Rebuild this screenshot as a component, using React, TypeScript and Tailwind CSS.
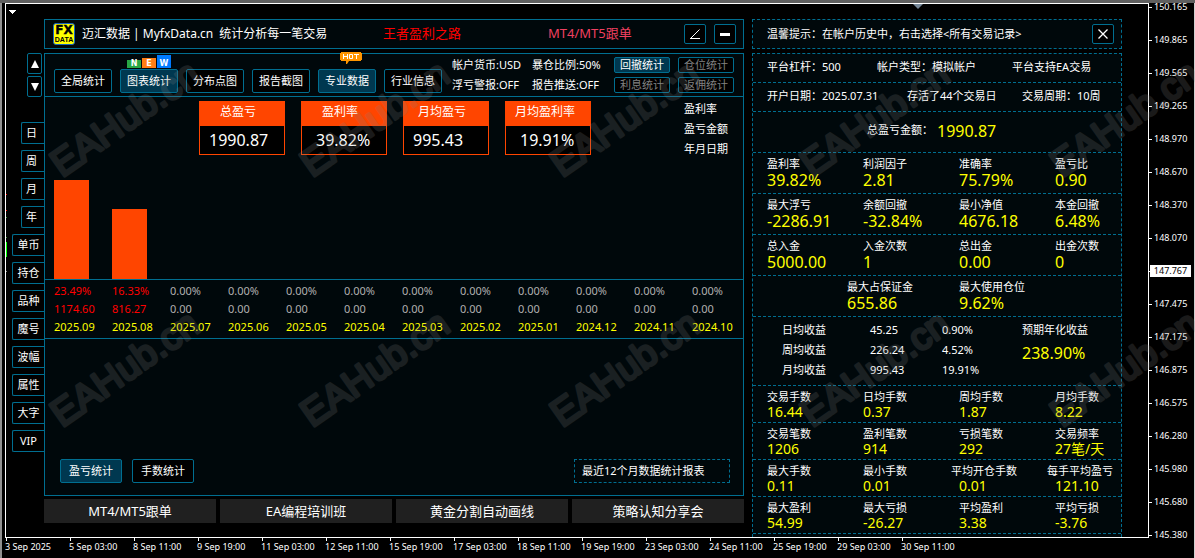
import { clsx } from "clsx";

const TOOL_TABS = ["全局统计", "图表统计", "分布点图", "报告截图", "专业数据", "行业信息"];
const SMALL_TABS = ["回撤统计", "仓位统计", "利息统计", "返佣统计"];
const SIDE_SHORT = ["日", "周", "月", "年"];
const SIDE_LONG = ["单币", "持仓", "品种", "魔号", "波幅", "属性", "大字", "VIP"];
const FOOTER_LINKS = ["MT4/MT5跟单", "EA编程培训班", "黄金分割自动画线", "策略认知分享会"];

const CARDS = [
  { label: "总盈亏", value: "1990.87", labelPad: "pl-5", valuePad: "pl-[9px]" },
  { label: "盈利率", value: "39.82%", labelPad: "pl-5", valuePad: "pl-[14px]" },
  { label: "月均盈亏", value: "995.43", labelPad: "pl-[14px]", valuePad: "pl-[9px]" },
  { label: "月均盈利率", value: "19.91%", labelPad: "pl-[9px]", valuePad: "pl-[14px]" },
];

const MONTHS = [
  { month: "2025.09", rate: "23.49%", profit: "1174.60", bar: 99 },
  { month: "2025.08", rate: "16.33%", profit: "816.27", bar: 70 },
  { month: "2025.07", rate: "0.00%", profit: "0.00", bar: 0 },
  { month: "2025.06", rate: "0.00%", profit: "0.00", bar: 0 },
  { month: "2025.05", rate: "0.00%", profit: "0.00", bar: 0 },
  { month: "2025.04", rate: "0.00%", profit: "0.00", bar: 0 },
  { month: "2025.03", rate: "0.00%", profit: "0.00", bar: 0 },
  { month: "2025.02", rate: "0.00%", profit: "0.00", bar: 0 },
  { month: "2025.01", rate: "0.00%", profit: "0.00", bar: 0 },
  { month: "2024.12", rate: "0.00%", profit: "0.00", bar: 0 },
  { month: "2024.11", rate: "0.00%", profit: "0.00", bar: 0 },
  { month: "2024.10", rate: "0.00%", profit: "0.00", bar: 0 },
];

const STATS_TOP = [
  [["盈利率", "39.82%"], ["利润因子", "2.81"], ["准确率", "75.79%"], ["盈亏比", "0.90"]],
  [["最大浮亏", "-2286.91"], ["余额回撤", "-32.84%"], ["最小净值", "4676.18"], ["本金回撤", "6.48%"]],
  [["总入金", "5000.00"], ["入金次数", "1"], ["总出金", "0.00"], ["出金次数", "0"]],
];

const STATS_BOTTOM = [
  [["交易手数", "16.44"], ["日均手数", "0.37"], ["周均手数", "1.87"], ["月均手数", "8.22"]],
  [["交易笔数", "1206"], ["盈利笔数", "914"], ["亏损笔数", "292"], ["交易频率", "27笔/天"]],
  [["最大手数", "0.11"], ["最小手数", "0.01"], ["平均开仓手数", "0.01"], ["每手平均盈亏", "121.10"]],
  [["最大盈利", "54.99"], ["最大亏损", "-26.27"], ["平均盈利", "3.38"], ["平均亏损", "-3.76"]],
];

const AVERAGES = [
  ["日均收益", "45.25", "0.90%"],
  ["周均收益", "226.24", "4.52%"],
  ["月均收益", "995.43", "19.91%"],
];

const PRICES = [
  "150.165", "149.865", "149.565", "149.265", "148.970", "148.670", "148.370", "148.070", "147.767",
  "147.475", "147.175", "146.875", "146.575", "146.280", "145.980", "145.680", "145.380",
];
const CURRENT_PRICE = "147.767";

const TIMES = [
  "3 Sep 2025", "5 Sep 03:00", "8 Sep 11:00", "9 Sep 19:00", "11 Sep 03:00", "12 Sep 11:00", "15 Sep 19:00",
  "17 Sep 03:00", "18 Sep 11:00", "19 Sep 19:00", "23 Sep 03:00", "24 Sep 11:00", "25 Sep 19:00",
  "29 Sep 03:00", "30 Sep 11:00",
];

const WATERMARKS = [0, 1, 2, 3, 4].flatMap((col) => [0, 1].map((row) => ({ x: 62 + col * 250, y: 175 + row * 250 })));

const Logo = () => (
  <svg width="22" height="22" viewBox="0 0 22 22" className="shrink-0" aria-hidden="true">
    <rect x="0.5" y="0.5" width="21" height="21" rx="2.5" fill="#ffff00" stroke="#1565c0" />
    <text x="11" y="11" textAnchor="middle" fontFamily="DejaVu Sans" fontWeight="700" fontSize="12" fill="#000" stroke="#000" strokeWidth="0.4">FX</text>
    <text x="11" y="19" textAnchor="middle" fontFamily="Liberation Sans" fontWeight="700" fontSize="7" fill="#000">DATA</text>
  </svg>
);

const NewBadge = () => (
  <span className="absolute -top-[15px] left-[6px] flex items-end gap-px font-['DejaVu_Sans'] text-[8px] leading-2 font-bold text-white">
    <span className="flex h-2 w-[14px] items-center justify-center bg-[#28a745]">N</span>
    <span className="flex h-[10px] w-[14px] items-end justify-center bg-[#fd7e14]">E</span>
    <span className="flex h-[13px] w-[14px] items-end justify-center bg-[#007bff]">W</span>
  </span>
);

const HotBadge = () => (
  <svg width="22" height="13" viewBox="0 0 22 13" className="absolute -top-[18px] left-[21px]" aria-hidden="true">
    <path d="M1 0h20v1h1v7h-1v1H9L7 12H6V9H1V8H0V1h1z" fill="#ff9500" />
    <path
      d="M3.5 2v5M7.5 2v5M3.5 4.5h4M9.5 2.5h3v4h-3zM14 2.5h5M16.5 2.5V7"
      fill="none"
      stroke="#fff"
      strokeWidth="1"
    />
  </svg>
);

const StatRow = ({ items, large }: { items: string[][]; large?: boolean }) => (
  <dl
    className={clsx(
      "grid grid-cols-[96px_96px_96px_1fr] border-b border-dashed border-[#006e90] pt-[3px] pl-[14px]",
      large ? "h-[41px]" : "h-[37px]",
    )}
  >
    {items.map(([label, value]) => (
      <div key={label} className="whitespace-nowrap">
        <dt className={clsx("leading-[15px]", label.length > 5 && "-ml-2")}>{label}</dt>
        <dd className={clsx("text-[#ffff00]", large ? "text-base leading-[18px]" : "text-sm leading-[15px]")}>{value}</dd>
      </div>
    ))}
  </dl>
);

const iconButton = "flex h-5 w-[22px] items-center justify-center rounded-[2px] border border-[#006e90] bg-black";
const sideButton = "h-[22px] rounded-l-[2px] border border-r-0 border-[#006e90] bg-black";

export default function App() {
  return (
    <div className="relative flex min-h-screen overflow-hidden border-t-3 border-[#606060] bg-black font-['Noto_Sans','Noto_Sans_CJK_SC',sans-serif] text-[11px] text-white">
      <div className="w-[5px] shrink-0 border-r-2 border-l-2 border-r-black border-l-[#909090]" />

      <div className="flex min-w-0 flex-1 flex-col">
        <main className="relative flex border border-white pt-[15px] pr-[26px]">
          <svg width="8" height="4" viewBox="0 0 8 4" className="absolute top-[6px] left-[3px]" aria-hidden="true">
            <path d="M0 0h7v1H6v1H5v1H4v1H3V3H2V2H1V1H0z" fill="#fff" />
          </svg>
          <svg width="10" height="5" viewBox="0 0 10 5" className="absolute top-0 right-[225px]" aria-hidden="true">
            <path d="M0 0h10L5 5z" fill="#778899" />
          </svg>
          {/* edges of the candles hidden behind the panel */}
          <svg width="2" height="80" viewBox="0 0 2 80" className="absolute top-[190px] left-0" aria-hidden="true">
            <path d="M0 0h1v1H0zM0 16h1v1H0z" fill="#f00" />
            <path d="M0 23h1v1H0zM0 43h1v1H0z" fill="#3a8a3a" />
            <path d="M0 48h1v15H0z" fill="#0f0" />
            <path d="M0 77h1v1H0z" fill="#888" />
          </svg>

          <nav className="flex w-[38px] shrink-0 flex-col items-end pt-[34px]">
            <div className="mr-[2px] flex flex-col gap-[2px]">
              {["M4 0l4 8H0z", "M4 8l4-8H0z"].map((d, i) => (
                <button
                  key={d}
                  aria-label={i === 0 ? "上移" : "下移"}
                  className="flex h-[21px] w-[15px] items-center justify-center rounded-[2px] border border-[#006e90] bg-black"
                >
                  <svg width="8" height="8" viewBox="0 0 8 8">
                    <path d={d} fill="#fff" />
                  </svg>
                </button>
              ))}
            </div>
            <div className="mt-[25px] flex flex-col items-end gap-[6px]">
              {SIDE_SHORT.map((name) => (
                <button key={name} className={clsx(sideButton, "w-[23px] pr-[3px]")}>{name}</button>
              ))}
              {SIDE_LONG.map((name) => (
                <button key={name} className={clsx(sideButton, "w-8")}>{name}</button>
              ))}
            </div>
          </nav>

          <div className="flex min-w-0 flex-1 flex-col">
            <header className="flex h-[30px] items-center border border-[#006e90] bg-[#00080b] pr-[7px] pl-2">
              <Logo />
              <h1 className="ml-[7px] flex w-[301px] gap-[6px] text-xs whitespace-nowrap">
                <span>迈汇数据 | MyfxData.cn</span>
                <span>统计分析每一笔交易</span>
              </h1>
              <a href="#road" className="w-[165px] text-[13px] text-[#ff0000]">王者盈利之路</a>
              <a href="#copy" className="text-[13px] text-[#f04060]">MT4/MT5跟单</a>
              <div className="ml-auto flex gap-2">
                <button className={iconButton} aria-label="画线">
                  <svg width="12" height="12" viewBox="0 0 12 12" fill="none" stroke="#fff">
                    <path d="M10.5 1.5l-9 9M1 10.5h10" />
                  </svg>
                </button>
                <button className={iconButton} aria-label="最小化">
                  <svg width="10" height="3" viewBox="0 0 10 3">
                    <path d="M0 0h10v3H0z" fill="#fff" />
                  </svg>
                </button>
              </div>
            </header>

            <section className="mt-1 border border-[#006e90] bg-[#00080b]">
              <div className="flex h-[43px] border-b border-[#006e90] pr-[9px] pl-[9px]">
                <div className="flex gap-2 pt-[15px]">
                  {TOOL_TABS.map((name, i) => (
                    <button
                      key={name}
                      className={clsx(
                        "relative h-6 w-[58px] rounded-[2px] border border-[#006e90] whitespace-nowrap",
                        i === 1 || i === 4 ? "bg-[#003850]" : "bg-black",
                      )}
                    >
                      {name}
                      {i === 1 && <NewBadge />}
                      {i === 4 && <HotBadge />}
                    </button>
                  ))}
                </div>
                <div className="ml-[10px] grid flex-1 grid-cols-[80px_1fr] content-start pt-px leading-5 whitespace-nowrap">
                  <span>帐户货币:USD</span>
                  <span>暴仓比例:50%</span>
                  <span>浮亏警报:OFF</span>
                  <span>报告推送:OFF</span>
                </div>
                <div className="grid grid-cols-2 content-start gap-x-2 gap-y-1 pt-[3px]">
                  {SMALL_TABS.map((name, i) => (
                    <button
                      key={name}
                      className={clsx(
                        "h-4 w-14 rounded-[2px] border border-[#006e90] leading-[14px]",
                        i === 0 ? "bg-[#003850]" : "bg-black text-[#808080]",
                      )}
                    >
                      {name}
                    </button>
                  ))}
                </div>
              </div>

              <div className="flex h-[182px] flex-col">
                <div className="flex justify-between pt-1 pr-[15px] pl-[154px]">
                  <div className="flex gap-4">
                    {CARDS.map((card) => (
                      <div key={card.label} className="h-[54px] w-[86px] border border-[#ff4500] bg-black whitespace-nowrap">
                        <h2 className={clsx("h-6 bg-[#ff4500] text-xs leading-5", card.labelPad)}>{card.label}</h2>
                        <p className={clsx("text-base leading-7", card.valuePad)}>{card.value}</p>
                      </div>
                    ))}
                  </div>
                  <ul className="-mt-[2px] leading-5">
                    <li>盈利率</li>
                    <li>盈亏金额</li>
                    <li>年月日期</li>
                  </ul>
                </div>
                <div className="grid flex-1 grid-cols-12 items-end pr-[2px]">
                  {MONTHS.map((m) => (
                    <div key={m.month} className="pl-[9px]">
                      <div className="w-[35px] bg-[#ff4500]" style={{ height: m.bar }} />
                    </div>
                  ))}
                </div>
              </div>

              <div className="border-y border-[#006e90] pt-[2px] pr-[2px] pb-[2px]">
                <table className="w-full table-fixed text-left leading-[18px]">
                  <tbody>
                    <tr>
                      {MONTHS.map((m) => (
                        <td key={m.month} className={clsx("pl-[9px]", m.bar ? "text-[#ff0000]" : "text-[#b0b0b0]")}>{m.rate}</td>
                      ))}
                    </tr>
                    <tr>
                      {MONTHS.map((m) => (
                        <td key={m.month} className={clsx("pl-[9px]", m.bar ? "text-[#ff0000]" : "text-[#b0b0b0]")}>{m.profit}</td>
                      ))}
                    </tr>
                    <tr>
                      {MONTHS.map((m) => (
                        <th key={m.month} scope="col" className="pl-[9px] font-normal text-[#ffff00]">{m.month}</th>
                      ))}
                    </tr>
                  </tbody>
                </table>
              </div>

              <div className="flex h-[156px] items-end gap-[10px] pr-[13px] pb-3 pl-[15px]">
                <button className="h-6 w-[62px] rounded-[2px] border border-[#006e90] bg-[#003850]">盈亏统计</button>
                <button className="h-6 w-[62px] rounded-[2px] border border-[#006e90] bg-black">手数统计</button>
                <p className="ml-auto h-6 w-[156px] border border-dashed border-[#006e90] pl-[7px] leading-[22px]">
                  最近12个月数据统计报表
                </p>
              </div>
            </section>

            <footer className="mt-[3px] mb-[14px] grid grid-cols-4 gap-1 text-[13px]">
              {FOOTER_LINKS.map((name) => (
                <a key={name} href="#more" className="h-6 bg-[#202020] text-center leading-6">{name}</a>
              ))}
            </footer>
          </div>

          <aside className="ml-2 flex w-[370px] shrink-0 flex-col whitespace-nowrap">
            <div className="flex h-[30px] items-center justify-between border border-dashed border-[#006e90] bg-[#00080b] pr-[7px] pl-[14px]">
              <p>温馨提示：在帐户历史中，右击选择&lt;所有交易记录&gt;</p>
              <button className={iconButton} aria-label="关闭">
                <svg width="10" height="10" viewBox="0 0 10 10" stroke="#fff" strokeWidth="1.3">
                  <path d="M0.5 0.5l9 9M9.5 0.5l-9 9" />
                </svg>
              </button>
            </div>

            <div className="mt-1 flex-1 border border-b-0 border-dashed border-[#006e90] bg-[#00080b]">
              <div className="grid h-[29px] grid-cols-[110px_135px_1fr] border-b border-dashed border-[#006e90] pl-[14px] leading-[26px]">
                <span>平台杠杆：500</span>
                <span>帐户类型：模拟帐户</span>
                <span>平台支持EA交易</span>
              </div>
              <div className="grid h-[29px] grid-cols-[140px_115px_1fr] border-b border-dashed border-[#006e90] pl-[14px] leading-[26px]">
                <span>开户日期：2025.07.31</span>
                <span>存活了44个交易日</span>
                <span>交易周期：10周</span>
              </div>
              <div className="flex h-[41px] items-center border-b border-dashed border-[#006e90] pb-[3px] pl-[114px]">
                <span className="w-[70px]">总盈亏金额：</span>
                <span className="text-base text-[#ffff00]">1990.87</span>
              </div>
              {STATS_TOP.map((items) => (
                <StatRow key={items[0][0]} items={items} large />
              ))}
              <dl className="grid h-[41px] grid-cols-[112px_1fr] border-b border-dashed border-[#006e90] pt-[3px] pl-[94px]">
                <div>
                  <dt className="leading-[15px]">最大占保证金</dt>
                  <dd className="text-base leading-[18px] text-[#ffff00]">655.86</dd>
                </div>
                <div>
                  <dt className="leading-[15px]">最大使用仓位</dt>
                  <dd className="text-base leading-[18px] text-[#ffff00]">9.62%</dd>
                </div>
              </dl>
              <div className="flex h-[69px] border-b border-dashed border-[#006e90] pt-[3px] pl-[29px]">
                <table className="w-60 table-fixed self-start text-left leading-5">
                  <tbody>
                    {AVERAGES.map(([label, amount, rate]) => (
                      <tr key={label}>
                        <th scope="row" className="w-[88px] font-normal">{label}</th>
                        <td className="w-[72px]">{amount}</td>
                        <td>{rate}</td>
                      </tr>
                    ))}
                  </tbody>
                </table>
                <div>
                  <p className="leading-5">预期年化收益</p>
                  <p className="text-base leading-[26px] text-[#ffff00]">238.90%</p>
                </div>
              </div>
              {STATS_BOTTOM.map((items) => (
                <StatRow key={items[0][0]} items={items} />
              ))}
            </div>
          </aside>
        </main>

        <ol className="flex pt-[3px] text-[9px] leading-3 whitespace-nowrap">
          {TIMES.map((time) => (
            <li
              key={time}
              className="relative w-16 shrink-0 before:absolute before:-top-[3px] before:left-px before:h-[3px] before:w-px before:bg-white"
            >
              {time}
            </li>
          ))}
        </ol>
      </div>

      <ol className="flex w-[46px] shrink-0 flex-col justify-between border-r border-[#d0d0d0] pb-[19px] text-[9px]">
        {PRICES.map((price) => (
          <li key={price} className="flex h-2 items-center gap-[2px] before:h-px before:w-[3px] before:bg-white">
            {price === CURRENT_PRICE ? (
              <span className="-ml-1 flex h-3 w-[41px] items-center justify-center bg-white text-black">{price}</span>
            ) : (
              price
            )}
          </li>
        ))}
      </ol>

      <svg className="pointer-events-none absolute inset-0 size-full opacity-20" aria-hidden="true">
        {WATERMARKS.map(({ x, y }) => (
          <text
            key={`${x}-${y}`}
            transform={`translate(${x} ${y}) rotate(-35)`}
            fontFamily="Liberation Sans"
            fontSize="38"
            fill="#808080"
            stroke="#808080"
            strokeWidth="3"
            strokeLinejoin="round"
          >
            EAHub.cn
          </text>
        ))}
      </svg>
    </div>
  );
}
